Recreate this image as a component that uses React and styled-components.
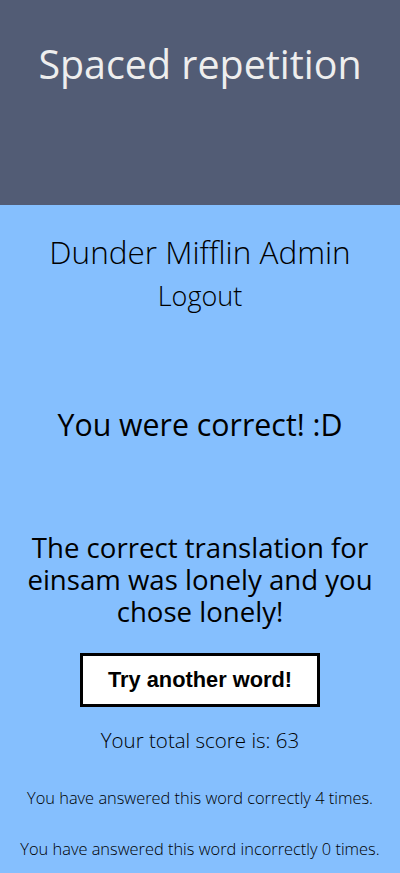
import React from 'react';
import styled, { createGlobalStyle } from 'styled-components';

const GlobalStyle = createGlobalStyle`
  body {
    margin: 0;
    font-family: 'Open Sans', 'Noto Sans', sans-serif;
    background: #85bffe;
  }
`;

const Header = styled.header`
  height: 205px;
  background: #525c75;
  display: flex;
  justify-content: center;
  align-items: flex-start;
`;

const Title = styled.h1`
  margin: 40px 0 0;
  font-size: 39.4px;
  line-height: 48px;
  font-weight: 400;
  color: #eeeeee;
`;

const Main = styled.main`
  display: flex;
  flex-direction: column;
  align-items: center;
  text-align: center;
  color: #000;
`;

const UserName = styled.h2`
  margin: 27px 0 0;
  font-size: 31.5px;
  line-height: 40px;
  font-weight: 300;
`;

const LogoutLink = styled.a`
  margin-top: 8px;
  font-size: 27px;
  line-height: 32px;
  font-weight: 300;
  color: #000;
  text-decoration: none;
  cursor: pointer;
`;

const Message = styled.h2`
  margin: ${({ $top }) => $top}px 0 0;
  padding: 0 ${({ $pad }) => $pad || 0}px;
  font-size: ${({ $size }) => $size}px;
  line-height: ${({ $line }) => $line}px;
  font-weight: 400;
`;

const NextButton = styled.button`
  margin-top: 26px;
  width: 240px;
  height: 54px;
  border: 3px solid #000;
  background: #fff;
  font-family: 'Liberation Sans', Arial, sans-serif;
  font-weight: 700;
  font-size: 21.8px;
  color: #000;
  cursor: pointer;
`;

const Score = styled.p`
  margin: 20px 0 0;
  font-size: 20.5px;
  line-height: 26px;
  font-weight: 300;
`;

const Stat = styled.p`
  margin: ${({ $top }) => $top}px 0 0;
  font-size: 16.4px;
  line-height: 22px;
  font-weight: 300;
`;

const App = () => {
  return (
    <>
      <GlobalStyle />
      <Header>
        <Title>Spaced repetition</Title>
      </Header>
      <Main>
        <UserName>Dunder Mifflin Admin</UserName>
        <LogoutLink href="#">Logout</LogoutLink>
        <Message $top={93} $size={30.3} $line={40}>
          You were correct! :D
        </Message>
        <Message $top={86} $size={27.6} $line={32} $pad={16}>
          The correct translation for einsam was lonely and you chose lonely!
        </Message>
        <NextButton>Try another word!</NextButton>
        <Score>Your total score is: 63</Score>
        <Stat $top={34}>You have answered this word correctly 4 times.</Stat>
        <Stat $top={29}>You have answered this word incorrectly 0 times.</Stat>
      </Main>
    </>
  );
};

export default App;
